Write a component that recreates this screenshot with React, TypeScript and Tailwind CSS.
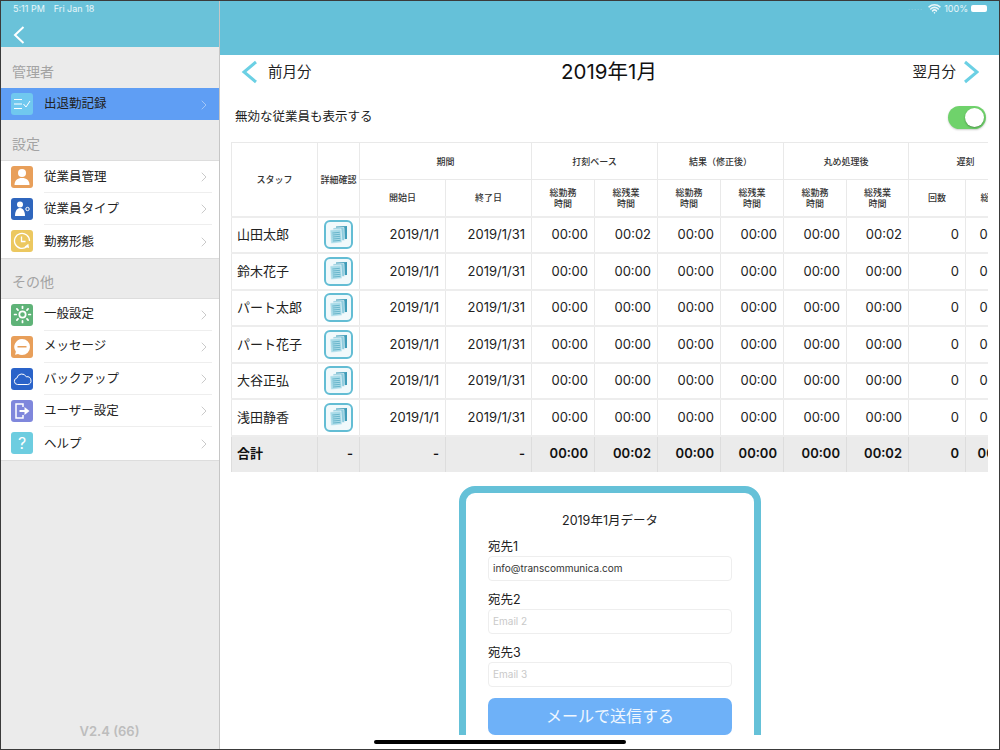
import { ChevronRight, Sun, Wifi } from "lucide-react";
import type { ReactNode } from "react";

const staff = [
  { name: "山田太郎", values: ["00:00", "00:02", "00:00", "00:00", "00:00", "00:02"] },
  { name: "鈴木花子", values: ["00:00", "00:00", "00:00", "00:00", "00:00", "00:00"] },
  { name: "パート太郎", values: ["00:00", "00:00", "00:00", "00:00", "00:00", "00:00"] },
  { name: "パート花子", values: ["00:00", "00:00", "00:00", "00:00", "00:00", "00:00"] },
  { name: "大谷正弘", values: ["00:00", "00:00", "00:00", "00:00", "00:00", "00:00"] },
  { name: "浅田静香", values: ["00:00", "00:00", "00:00", "00:00", "00:00", "00:00"] },
];

const IconBox = ({ color, children }: { color: string; children: ReactNode }) => (
  <div className={`flex size-[22px] shrink-0 items-center justify-center rounded-[3px] text-white ${color}`}>
    {children}
  </div>
);

const ListIcon = () => (
  <svg width="18" height="12" viewBox="0 0 18 12" fill="none" stroke="white" strokeWidth="1">
    <path d="M1 1.500h8M1 6h8M1 10.500h8M10.500 6l2.500 3 4-6" />
  </svg>
);

const PersonIcon = () => (
  <svg width="18" height="18" viewBox="0 0 18 18" fill="white">
    <circle cx="9" cy="5" r="4" />
    <path d="M1.500 17c0-4.500 3-7 7.500-7s7.500 2.500 7.500 7z" />
  </svg>
);

const TypeIcon = () => (
  <svg width="18" height="18" viewBox="0 0 18 18" fill="white">
    <circle cx="7" cy="4.500" r="3" />
    <path d="M2 16c0-4 1.500-8 5-8s5 4 5 8z" />
    <circle cx="14.500" cy="9" r="1.700" fill="none" stroke="white" strokeWidth="1" />
  </svg>
);

const ClockIcon = () => (
  <svg width="18" height="18" viewBox="0 0 18 18" fill="none" stroke="white" strokeWidth="1.300">
    <path d="M14 14.500A7.500 7.500 0 1 1 16.500 9" />
    <path d="M8.500 4.500v5h4" />
    <path d="M11.500 14.800l4.500 1.200-.6-4.200z" fill="white" stroke="none" />
  </svg>
);

const BubbleIcon = () => (
  <svg width="18" height="18" viewBox="0 0 18 18">
    <path d="M9 1a8 8 0 0 1 0 16c-1.500 0-2.800-.3-4-1l-3 .8.900-3A8 8 0 0 1 9 1z" fill="white" />
    <rect x="4.500" y="8" width="9" height="1.500" fill="#e89f5a" />
  </svg>
);

const CloudIcon = () => (
  <svg width="19" height="14" viewBox="0 0 19 14" fill="none" stroke="white" strokeWidth="1">
    <path d="M4.500 12.500a3.300 3.300 0 0 1-.6-6.500 5 5 0 0 1 9.400-1.200 3.900 3.900 0 0 1 1.500 7.700z" />
  </svg>
);

const LogoutIcon = () => (
  <svg width="18" height="18" viewBox="0 0 18 18" fill="none" stroke="white" strokeWidth="1.500">
    <path d="M10 5V2H3v14h7v-3" />
    <path d="M6.500 8h5V5l5 4-5 4v-3h-5z" fill="white" stroke="none" />
  </svg>
);

const DocIcon = () => (
  <div className="mx-auto flex h-[29px] w-[29px] items-center justify-center rounded-[6px] border-2 border-[#63bdd4] bg-[#f1f9fb]">
    <svg width="19" height="20" viewBox="0 0 19 20">
      <path d="M7 1.500l11-.5v13l-11 .5z" fill="#3f9cb8" />
      <path d="M4 3l11-.5.5 13-11 .5z" fill="#8ccbdd" stroke="#f1f9fb" strokeWidth=".6" />
      <path d="M1 5l11-1 1 13.500-11 1z" fill="#a9dbe8" stroke="#f1f9fb" strokeWidth=".6" />
      <path d="M3.300 8l7.500-.7M3.500 10l7.500-.7M3.700 12l7.500-.7M3.900 14l7.500-.7M4 16l7.500-.7" stroke="#4ea5bf" strokeWidth=".7" />
    </svg>
  </div>
);

const SectionLabel = ({ height, children }: { height: string; children: ReactNode }) => (
  <div className={`flex items-center px-[12px] pt-[7px] text-[14px] text-[#a3a3a3] ${height}`}>{children}</div>
);

const MenuRow = ({
  icon,
  label,
  last = false,
  active = false,
}: {
  icon: ReactNode;
  label: string;
  last?: boolean;
  active?: boolean;
}) => (
  <div className={`flex items-center pl-[11px] pr-[7px] ${active ? "h-[32px] bg-[#5f9ef4]" : "h-[32.2px] bg-white"}`}>
    {icon}
    <div
      className={`ml-[11px] flex h-full flex-1 items-center justify-between pt-[1px] ${
        last || active ? "" : "border-b border-[#eeeeee]"
      }`}
    >
      <span className="text-[12.5px] text-[#222222]">{label}</span>
      <ChevronRight size={16} strokeWidth={1.200} className={active ? "text-[#b5d0f6]" : "text-[#bcbcbc]"} />
    </div>
  </div>
);

const Sidebar = () => (
  <aside className="flex h-full w-[220px] shrink-0 flex-col border-r border-[#c6c6c6] bg-[#ebebeb]">
    <div className="h-[47px] shrink-0 bg-[#6ac2d9] pl-[13px] pt-[26px]">
      <svg width="12" height="18" viewBox="0 0 12 18" fill="none" stroke="white" strokeWidth="2">
        <path d="M10.500 1L2 9l8.500 8" />
      </svg>
    </div>
    <SectionLabel height="h-[41px]">管理者</SectionLabel>
    <MenuRow active icon={<IconBox color="bg-[#70c8ef]"><ListIcon /></IconBox>} label="出退勤記録" />
    <SectionLabel height="h-[40px]">設定</SectionLabel>
    <div className="border-y border-[#dddddd]">
      <MenuRow icon={<IconBox color="bg-[#e89f5a]"><PersonIcon /></IconBox>} label="従業員管理" />
      <MenuRow icon={<IconBox color="bg-[#2f66bd]"><TypeIcon /></IconBox>} label="従業員タイプ" />
      <MenuRow last icon={<IconBox color="bg-[#ecc860]"><ClockIcon /></IconBox>} label="勤務形態" />
    </div>
    <SectionLabel height="h-[39px]">その他</SectionLabel>
    <div className="border-y border-[#dddddd]">
      <MenuRow icon={<IconBox color="bg-[#5fb378]"><Sun size={19} strokeWidth={2.200} /></IconBox>} label="一般設定" />
      <MenuRow icon={<IconBox color="bg-[#e89f5a]"><BubbleIcon /></IconBox>} label="メッセージ" />
      <MenuRow icon={<IconBox color="bg-[#2a63c9]"><CloudIcon /></IconBox>} label="バックアップ" />
      <MenuRow icon={<IconBox color="bg-[#7f87dc]"><LogoutIcon /></IconBox>} label="ユーザー設定" />
      <MenuRow last icon={<IconBox color="bg-[#6dcde0]"><span className="text-[16px] leading-none">?</span></IconBox>} label="ヘルプ" />
    </div>
    <div className="mt-auto pb-[9px] text-center text-[13px] font-semibold text-[#bdbdbd]">V2.4 (66)</div>
  </aside>
);

const th = "border border-[#e9e9e9] p-0 text-center align-middle text-[9px] font-medium leading-[11px] text-[#333333]";
const td = "border-x border-y-2 border-x-[#e9e9e9] border-y-[#ededed] px-[6px] text-right text-[13px] text-[#222222]";
const tdTotal = "border-x border-[#dddddd] px-[6px] text-right text-[13px] font-semibold text-[#111111]";

const WorkTable = () => (
  <div className="mx-[11px] w-[757px] overflow-hidden">
    <table className="w-[791px] table-fixed border-collapse">
      <colgroup>
        <col className="w-[86px]" />
        <col className="w-[42px]" />
        <col className="w-[86px]" />
        <col className="w-[86px]" />
        <col className="w-[63px]" />
        <col className="w-[63px]" />
        <col className="w-[63px]" />
        <col className="w-[63px]" />
        <col className="w-[63px]" />
        <col className="w-[62px]" />
        <col className="w-[57px]" />
        <col className="w-[57px]" />
      </colgroup>
      <thead>
        <tr className="h-[37px]">
          <th rowSpan={2} className={th}>スタッフ</th>
          <th rowSpan={2} className={th}>詳細確認</th>
          <th colSpan={2} className={th}>期間</th>
          <th colSpan={2} className={th}>打刻ベース</th>
          <th colSpan={2} className={th}>結果（修正後）</th>
          <th colSpan={2} className={th}>丸め処理後</th>
          <th colSpan={2} className={th}>遅刻</th>
        </tr>
        <tr className="h-[37px]">
          <th className={th}>開始日</th>
          <th className={th}>終了日</th>
          <th className={th}>総勤務<br />時間</th>
          <th className={th}>総残業<br />時間</th>
          <th className={th}>総勤務<br />時間</th>
          <th className={th}>総残業<br />時間</th>
          <th className={th}>総勤務<br />時間</th>
          <th className={th}>総残業<br />時間</th>
          <th className={th}>回数</th>
          <th className={th}>総時間</th>
        </tr>
      </thead>
      <tbody>
        {staff.map((row) => (
          <tr key={row.name} className="h-[36.5px]">
            <td className={`${td} !pl-[5px] !text-left`}>{row.name}</td>
            <td className={`${td} !px-0`}><DocIcon /></td>
            <td className={td}>2019/1/1</td>
            <td className={td}>2019/1/31</td>
            {row.values.map((value, i) => (
              <td key={i} className={td}>{value}</td>
            ))}
            <td className={td}>0</td>
            <td className={td}>00:00</td>
          </tr>
        ))}
        <tr className="h-[36px] bg-[#ebebeb]">
          <td className={`${tdTotal} !pl-[5px] !text-left`}>合計</td>
          <td className={tdTotal}>-</td>
          <td className={tdTotal}>-</td>
          <td className={tdTotal}>-</td>
          <td className={tdTotal}>00:00</td>
          <td className={tdTotal}>00:02</td>
          <td className={tdTotal}>00:00</td>
          <td className={tdTotal}>00:00</td>
          <td className={tdTotal}>00:00</td>
          <td className={tdTotal}>00:02</td>
          <td className={tdTotal}>0</td>
          <td className={tdTotal}>00:00</td>
        </tr>
      </tbody>
    </table>
  </div>
);

const EmailField = ({ label, value, placeholder }: { label: string; value?: string; placeholder: string }) => (
  <div>
    <div className="h-[19px] text-[12.5px] leading-[19px] text-[#222222]">{label}</div>
    <div className="flex h-[25px] items-center rounded-[4px] border border-[#eeeeee] px-[4px] text-[10px]">
      {value ? <span className="text-[#333333]">{value}</span> : <span className="text-[#c9c9c9]">{placeholder}</span>}
    </div>
  </div>
);

const MailCard = () => (
  <div className="mx-auto mt-[14px] h-[280px] w-[302px] rounded-[16px] border-[7px] border-[#65c1d8] px-[22px] pt-[19px]">
    <div className="text-center text-[12.5px] leading-[18px] text-[#222222]">2019年1月データ</div>
    <div className="mt-[7px] flex flex-col gap-[9px]">
      <EmailField label="宛先1" value="info@transcommunica.com" placeholder="Email 1" />
      <EmailField label="宛先2" placeholder="Email 2" />
      <EmailField label="宛先3" placeholder="Email 3" />
    </div>
    <div className="mt-[11px] flex h-[37px] items-center justify-center rounded-[7px] bg-[#6eb1f8] text-[16px] text-white/90">
      メールで送信する
    </div>
  </div>
);

const Main = () => (
  <main className="flex h-full min-w-0 flex-1 flex-col bg-white">
    <div className="h-[55px] shrink-0 bg-[#65c1d9]" />
    <div className="min-h-0 flex-1 overflow-hidden">
      <div className="flex h-[34px] items-center justify-between pl-[19px] pr-[21px]">
        <div className="flex w-[120px] items-center gap-[7px] text-[14.5px] text-[#222222]">
          <svg width="22" height="24" viewBox="0 0 22 24" fill="none" stroke="#6bd0e4" strokeWidth="3">
            <path d="M17 2L5 12l12 10" />
          </svg>
          前月分
        </div>
        <div className="text-[20.5px] text-[#111111]">2019年1月</div>
        <div className="flex w-[120px] items-center justify-end gap-[7px] text-[14.5px] text-[#222222]">
          翌月分
          <svg width="16" height="24" viewBox="0 0 16 24" fill="none" stroke="#6bd0e4" strokeWidth="3">
            <path d="M2 2l12 10L2 22" />
          </svg>
        </div>
      </div>
      <div className="flex h-[53px] items-center justify-between pl-[15px] pr-[14px] pt-[3px]">
        <span className="text-[12.5px] text-[#222222]">無効な従業員も表示する</span>
        <div className="flex h-[23px] w-[38px] items-center justify-end rounded-full bg-[#6fd26b] p-[2px] shadow-[0_1px_2px_rgba(0,0,0,0.2)]">
          <div className="size-[19px] rounded-full bg-white shadow-[0_1px_2px_rgba(0,0,0,0.3)]" />
        </div>
      </div>
      <WorkTable />
      <MailCard />
    </div>
    <div className="h-[15px] shrink-0 bg-white" />
  </main>
);

export default function App() {
  return (
    <div className="relative flex h-[750px] w-[1000px] overflow-hidden font-['Inter','Noto_Sans_CJK_JP',sans-serif]">
      <Sidebar />
      <Main />
      {/* status bar sits over both headers */}
      <div className="absolute inset-x-0 top-0 flex h-[17px] items-center justify-between pl-[13px] pr-[13px] text-[9px] text-white/85">
        <div className="flex gap-[9px]">
          <span>5:11 PM</span>
          <span>Fri Jan 18</span>
        </div>
        <div className="flex items-center gap-[3px]">
          <span className="mr-[2px] text-[7px] tracking-[1px] text-white/30">.....</span>
          <Wifi size={13} strokeWidth={3} />
          <span>100%</span>
          <div className="h-[7px] w-[16px] rounded-[2px] bg-white" />
        </div>
      </div>
      <div className="absolute bottom-[6px] left-[374px] h-[4px] w-[252px] rounded-full bg-black" />
      {/* device frame line */}
      <div className="pointer-events-none absolute inset-0 border border-[#3a3a3a]" />
    </div>
  );
}
